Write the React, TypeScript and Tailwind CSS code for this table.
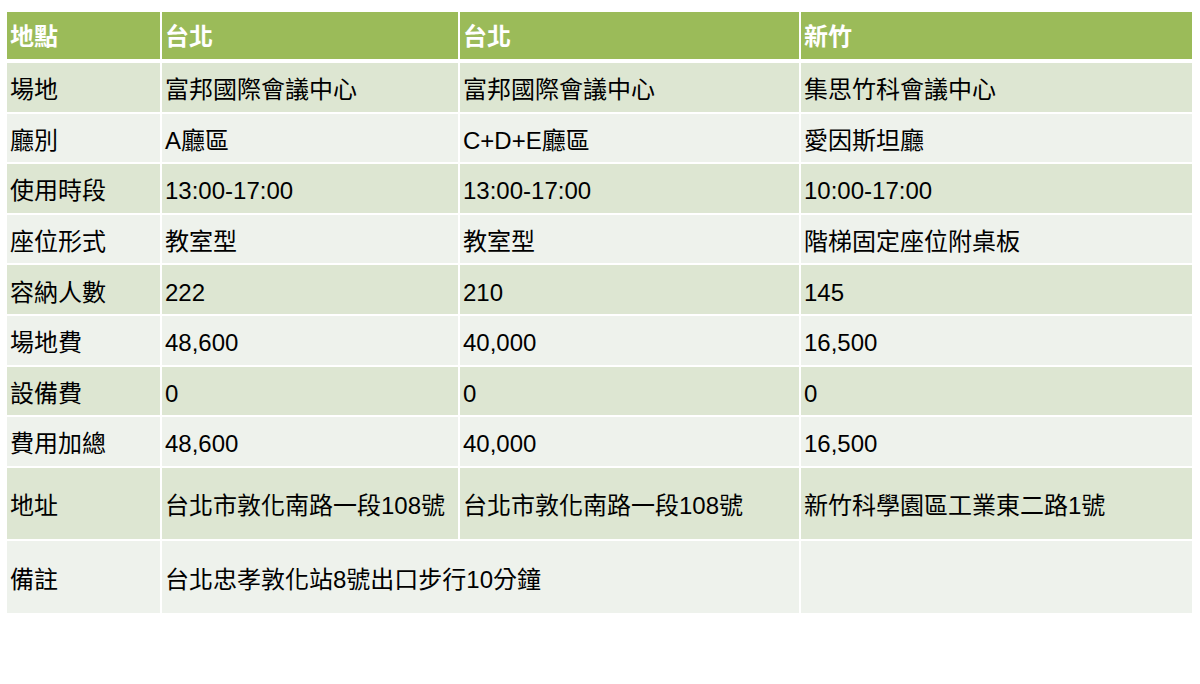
const header = ["地點", "台北", "台北", "新竹"];

const rows: { cells: string[]; tall?: string }[] = [
  { cells: ["場地", "富邦國際會議中心", "富邦國際會議中心", "集思竹科會議中心"] },
  { cells: ["廳別", "A廳區", "C+D+E廳區", "愛因斯坦廳"] },
  { cells: ["使用時段", "13:00-17:00", "13:00-17:00", "10:00-17:00"] },
  { cells: ["座位形式", "教室型", "教室型", "階梯固定座位附桌板"] },
  { cells: ["容納人數", "222", "210", "145"] },
  { cells: ["場地費", "48,600", "40,000", "16,500"] },
  { cells: ["設備費", "0", "0", "0"] },
  { cells: ["費用加總", "48,600", "40,000", "16,500"] },
  { cells: ["地址", "台北市敦化南路一段108號", "台北市敦化南路一段108號", "新竹科學園區工業東二路1號"], tall: "h-[71px]" },
  { cells: ["備註", "台北忠孝敦化站8號出口步行10分鐘", "", ""], tall: "h-[72px]" },
];

const App = () => {
  return (
    <div
      className="w-[1200px] h-[684px] bg-white pt-[12px] pl-[7px] overflow-hidden"
      style={{ fontFamily: '"Liberation Sans", "Noto Sans CJK TC", sans-serif' }}
    >
      <div className="w-[1185px] flex flex-col gap-[2px] text-[24px] leading-none text-black">
        {/* Header */}
        <div className="grid grid-cols-[153px_296px_339px_391px] gap-x-[2px] h-[47px] mb-[2px]">
          {header.map((h, i) => (
            <div key={i} className="bg-[#9bbb59] flex items-center pl-[3px] pt-[2px] font-bold text-white whitespace-nowrap">
              {h}
            </div>
          ))}
        </div>

        {/* Body */}
        {rows.map((row, r) => (
          <div
            key={r}
            className={`grid grid-cols-[153px_296px_339px_391px] gap-x-[2px] ${row.tall ?? "h-[48.6px]"}`}
          >
            {row.cells.map((c, i) => {
              const spanned = r === rows.length - 1 && i === 1;
              if (r === rows.length - 1 && i === 2) return null;
              return (
                <div
                  key={i}
                  className={`flex items-center pl-[3px] pt-[6px] whitespace-nowrap ${
                    r % 2 === 0 ? "bg-[#dde6d2]" : "bg-[#eef2ec]"
                  } ${spanned ? "col-span-2" : ""}`}
                >
                  {c}
                </div>
              );
            })}
          </div>
        ))}
      </div>
    </div>
  );
};

export default App;
